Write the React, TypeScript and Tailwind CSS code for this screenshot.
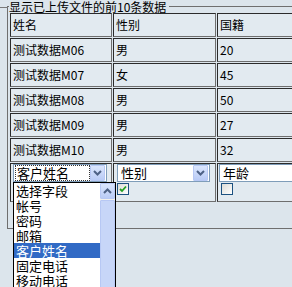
const ROWS: string[][] = [
  ['测试数据M06', '男', '20'],
  ['测试数据M07', '女', '45'],
  ['测试数据M08', '男', '50'],
  ['测试数据M09', '男', '27'],
  ['测试数据M10', '男', '32'],
]

const OPTIONS = ['选择字段', '帐号', '密码', '邮箱', '客户姓名', '固定电话', '移动电话']

const cellCls =
  'h-[24px] border-t border-l border-r border-b border-t-[#2b2b2b] border-l-[#2b2b2b] border-r-[#6e6e6e] border-b-[#6e6e6e] bg-[#e2eaf0] px-[2px] py-0 text-left align-middle font-normal'

function Chevron({ up }: { up?: boolean }) {
  return (
    <svg width="9" height="6" viewBox="0 0 9 6">
      <path
        d={up ? 'M1 5 L4.5 1.5 L8 5' : 'M1 1 L4.5 4.5 L8 1'}
        fill="none"
        stroke="#4d6185"
        strokeWidth="2"
      />
    </svg>
  )
}

function ArrowBtn({ up }: { up?: boolean }) {
  return (
    <div className="flex h-[16px] w-[15px] items-center justify-center rounded-[1px] border border-[#b7c8f4] bg-gradient-to-b from-[#dbe6fd] to-[#b9cbf6]">
      <Chevron up={up} />
    </div>
  )
}

function Select({ value, focused, w }: { value: string; focused?: boolean; w: string }) {
  return (
    <div className={`flex h-[18px] items-center justify-between border border-[#7f9db9] bg-white pr-px ${w}`}>
      <span
        className={`ml-px flex h-[16px] flex-1 items-center pl-[2px] text-[13px] leading-[16px] ${
          focused ? 'outline-1 outline-dotted outline-[#333] -outline-offset-1' : ''
        }`}
      >
        {value}
      </span>
      <ArrowBtn />
    </div>
  )
}

function Checkbox({ checked }: { checked?: boolean }) {
  return (
    <div className="flex h-[12px] w-[12px] items-center justify-center border border-[#1c5180] bg-gradient-to-br from-[#dcdcd7] to-white">
      {checked && (
        <svg width="8" height="8" viewBox="0 0 8 8">
          <path d="M1 4 L3 6 L7 1.5" fill="none" stroke="#21a121" strokeWidth="1.8" />
        </svg>
      )}
    </div>
  )
}

export default function App() {
  return (
    <div className="relative h-[287px] w-[292px] overflow-hidden bg-[#dce5ec] font-['Noto_Sans_CJK_SC',sans-serif] text-[12px] text-black">
      <div className="absolute left-0 top-[7px] h-px w-[8px] bg-[#7a7a7a]" />
      <fieldset className="ml-[7px] h-[229px] w-[285px] border border-[#6f6f6f] pl-px pr-0 pb-0">
        <legend className="ml-0 pr-[3px] text-[12px] leading-[13px]">显示已上传文件的前10条数据</legend>
        <table className="-mt-px w-[310px] table-fixed border-separate border-spacing-[1px]">
          <colgroup>
            <col className="w-[102px]" />
            <col className="w-[103px]" />
            <col className="w-[102px]" />
          </colgroup>
          <thead>
            <tr>
              <th className={cellCls}>姓名</th>
              <th className={cellCls}>性别</th>
              <th className={cellCls}>国籍</th>
            </tr>
          </thead>
          <tbody>
            {ROWS.map((r) => (
              <tr key={r[0]}>
                {r.map((c, i) => (
                  <td key={i} className={cellCls}>
                    {c}
                  </td>
                ))}
              </tr>
            ))}
            <tr>
              <td className={`${cellCls} h-[39px] !px-0 !align-top`}>
                <div className="ml-[2px] mt-0">
                  <Select value="客户姓名" focused w="w-[94px]" />
                </div>
              </td>
              <td className={`${cellCls} h-[39px] !px-0 !align-top`}>
                <div className="ml-[3px] flex flex-col gap-px">
                  <Select value="性别" w="w-[93px]" />
                  <Checkbox checked />
                </div>
              </td>
              <td className={`${cellCls} h-[39px] !px-0 !align-top`}>
                <div className="ml-px flex flex-col gap-px">
                  <Select value="年龄" w="w-[100px]" />
                  <div className="ml-[2px]">
                    <Checkbox />
                  </div>
                </div>
              </td>
            </tr>
          </tbody>
        </table>
      </fieldset>

      <div className="absolute left-[13px] top-[182px] flex h-[110px] w-[103px] border border-black bg-white">
        <ul className="flex-1">
          {OPTIONS.map((o) => (
            <li
              key={o}
              className={`h-[15px] pl-[2px] text-[13px] leading-[15px] ${
                o === '客户姓名' ? 'bg-[#316ac5] text-white' : ''
              }`}
            >
              {o}
            </li>
          ))}
        </ul>
        <div className="flex w-[15px] flex-col gap-px bg-[#f3f1ec]">
          <ArrowBtn up />
          <div className="flex-1 rounded-[1px] border border-[#b7c8f4] bg-[#c7d6f8]" />
        </div>
      </div>
    </div>
  )
}
